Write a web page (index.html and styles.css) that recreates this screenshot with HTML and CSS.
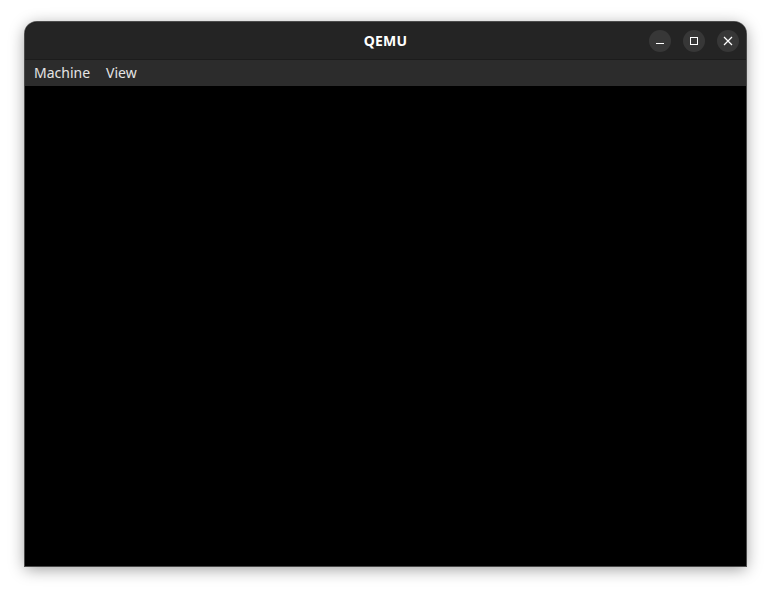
FILE: index.html
```html
<!DOCTYPE html>
<html>
<head>
<meta charset="utf-8">
<link rel="stylesheet" href="styles.css">
</head>
<body>
<div class="window">
  <div class="titlebar">
    <div class="title">QEMU</div>
    <div class="controls">
      <div class="btn"><svg width="22" height="22" viewBox="0 0 22 22"><rect x="7" y="13" width="8" height="1" fill="#fff"/></svg></div>
      <div class="btn"><svg width="22" height="22" viewBox="0 0 22 22"><rect x="7.5" y="7.5" width="7" height="7" fill="none" stroke="#fff" stroke-width="1"/></svg></div>
      <div class="btn"><svg width="22" height="22" viewBox="0 0 22 22"><path d="M7 7 L15 15 M15 7 L7 15" stroke="#fff" stroke-width="1.2"/></svg></div>
    </div>
  </div>
  <div class="menubar">
    <span class="menu">Machine</span>
    <span class="menu">View</span>
  </div>
  <div class="screen"></div>
</div>
</body>
</html>
```
FILE: styles.css
```css
html, body {
  margin: 0;
  padding: 0;
  background: #ffffff;
}
body {
  height: 595px;
  overflow: hidden;
  box-sizing: border-box;
  padding: 22px 0 0 25px;
  font-family: "Noto Sans", "Open Sans", sans-serif;
}
.window {
  width: 721px;
  height: 544px;
  display: flex;
  flex-direction: column;
  border-radius: 12px 12px 0 0;
  overflow: hidden;
  background: #000;
  box-shadow: 0 0 0 1px rgba(60, 60, 60, 0.9), 0 3px 16px rgba(0, 0, 0, 0.4);
}
.titlebar {
  height: 37px;
  flex: none;
  background: #242424;
  border-bottom: 1px solid #1c1c1c;
  display: flex;
  align-items: center;
  justify-content: center;
  position: relative;
}
.title {
  color: #ffffff;
  font-weight: 700;
  font-size: 14px;
  letter-spacing: 0.2px;
}
.controls {
  position: absolute;
  right: 7px;
  top: 8px;
  display: flex;
  gap: 12px;
}
.btn {
  width: 22px;
  height: 22px;
  border-radius: 50%;
  background: #373737;
  display: flex;
}
.menubar {
  height: 26px;
  flex: none;
  box-sizing: border-box;
  padding: 0 0 2px 9px;
  background: #2c2c2c;
  display: flex;
  align-items: center;
  gap: 16px;
}
.menu {
  color: #e4e4e4;
  font-size: 14px;
}
.screen {
  flex: 1;
  background: #000;
}
```
